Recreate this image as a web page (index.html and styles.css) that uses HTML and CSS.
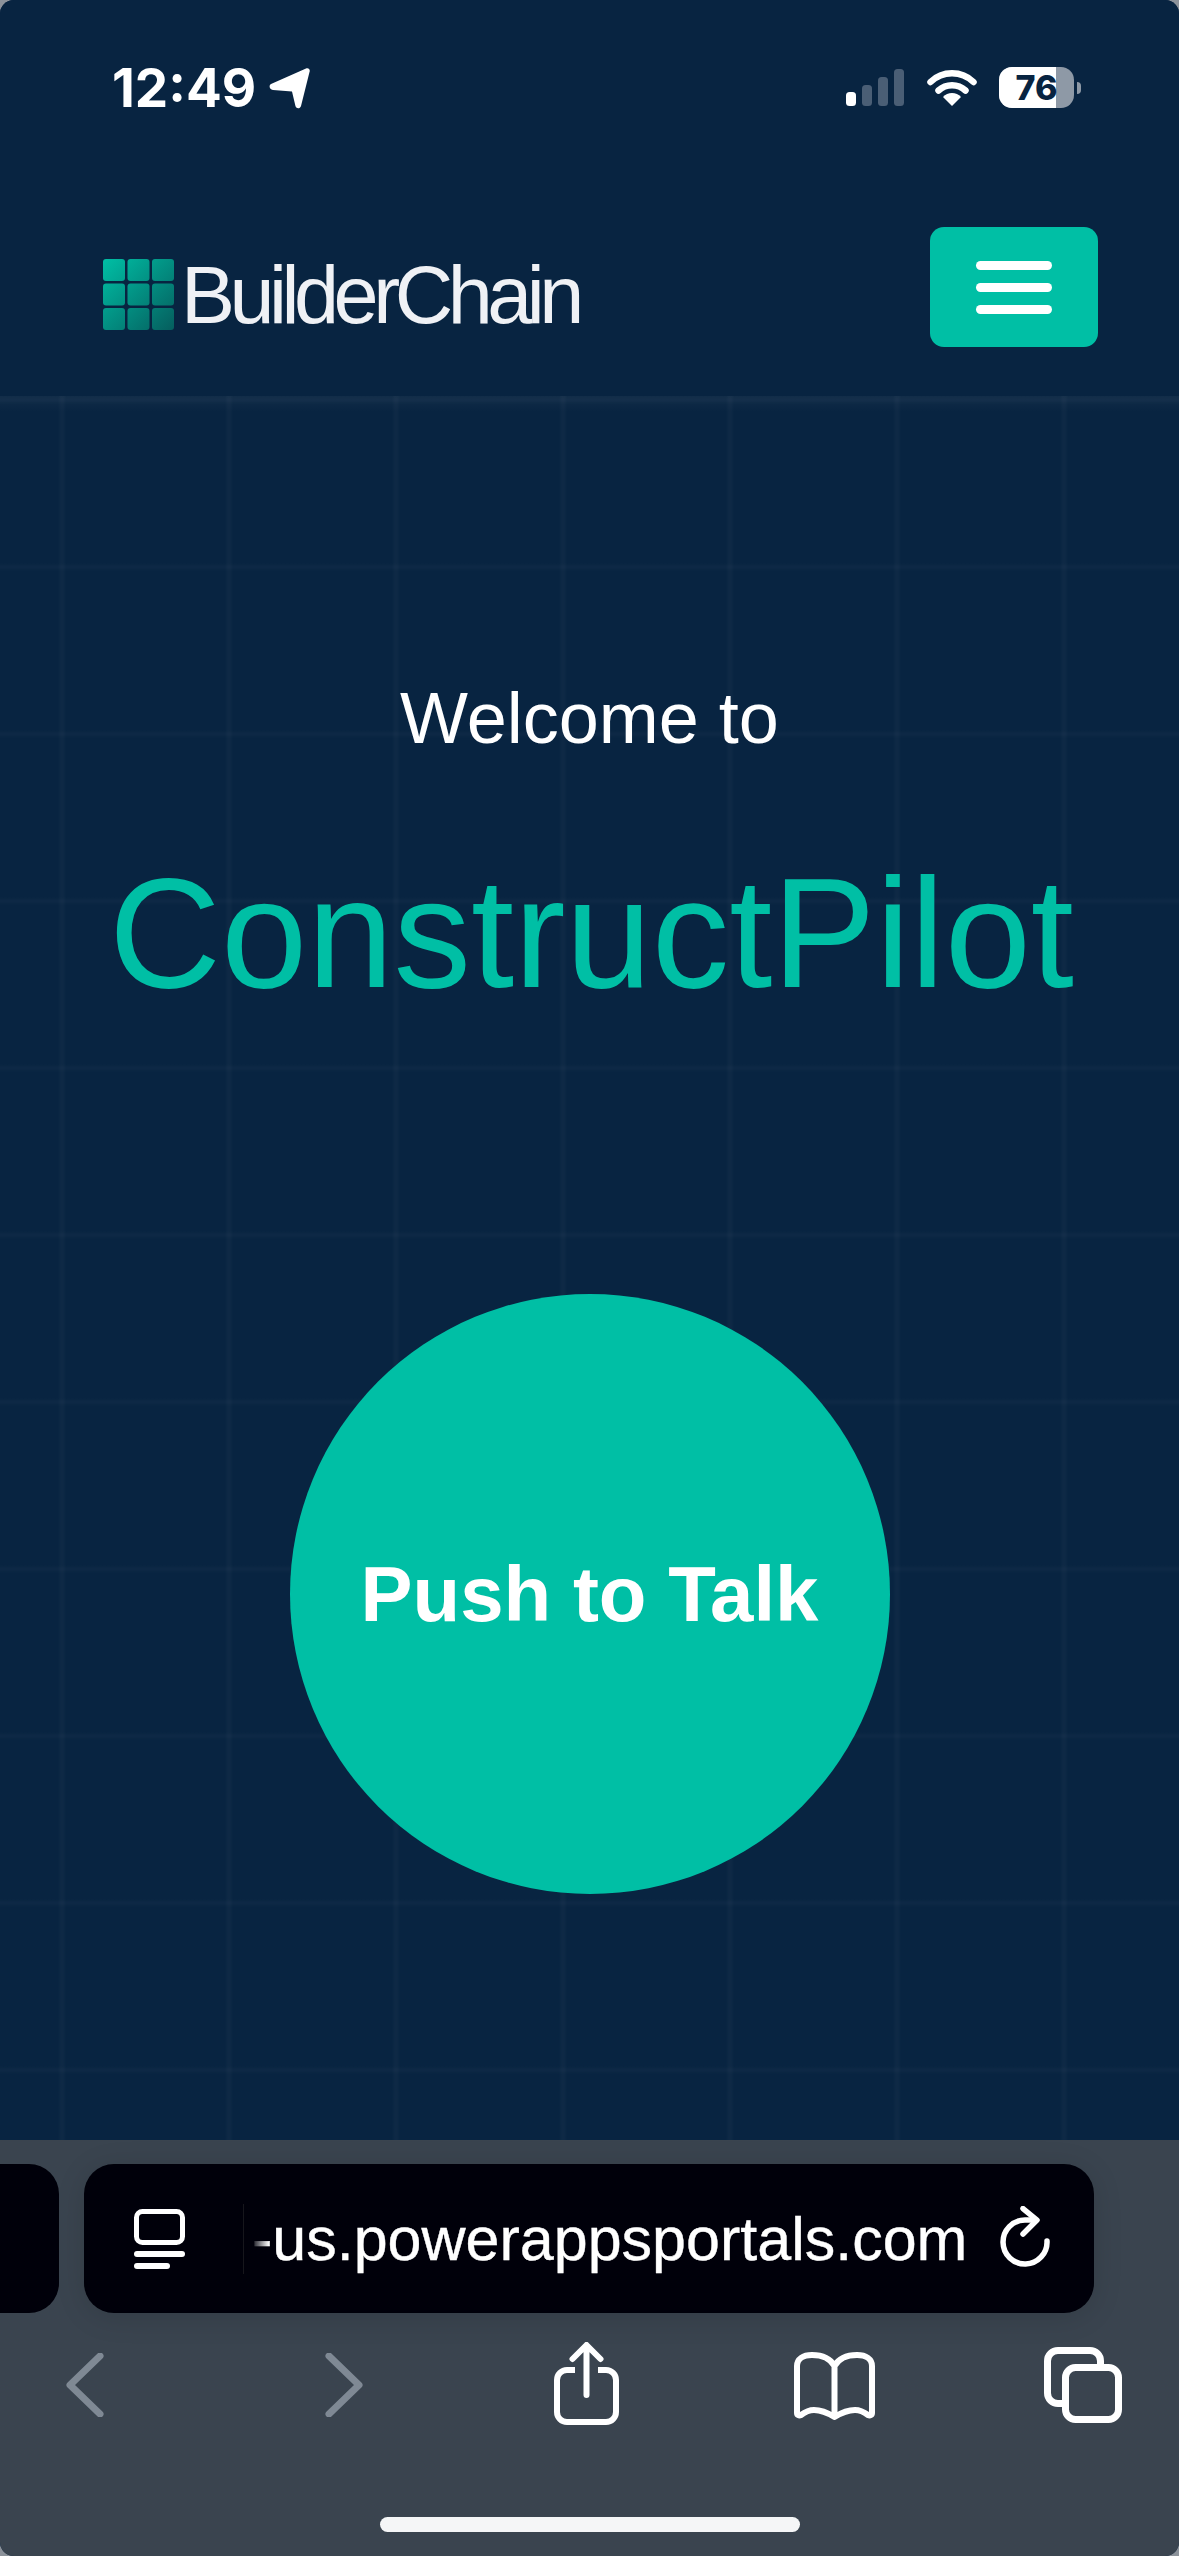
FILE: index.html
```html
<!DOCTYPE html>
<html lang="en">
<head>
<meta charset="utf-8">
<title>ConstructPilot</title>
<link rel="stylesheet" href="styles.css">
</head>
<body>
<div class="phone">
  <div class="page">
    <div class="status">
      <div class="status-left">
        <span class="time">12:49</span>
        <svg class="loc" width="42" height="42" viewBox="0 0 42 42"><path d="M2 17 37 1.500c2.500-1 4.500 1 3.500 3.500L32 39c-1 3-4.500 3-5.500.3L23 24.500 4 23c-3.500-.3-4.500-4.500-2-6z" fill="#fff"/></svg>
      </div>
      <div class="status-right">
        <svg class="signal" width="58" height="37" viewBox="0 0 58 37"><rect x="0" y="23" width="10" height="14" rx="3.500" fill="#fff"/><rect x="16" y="16" width="10" height="21" rx="3.500" fill="#4a5e75"/><rect x="32" y="8" width="10" height="29" rx="3.500" fill="#4a5e75"/><rect x="48" y="0" width="10" height="37" rx="3.500" fill="#4a5e75"/></svg>
        <svg class="wifi" width="50" height="37" viewBox="0 0 50 37"><path d="M3.500 13a31 31 0 0 1 43 0M11.500 21.500a20 20 0 0 1 27 0" fill="none" stroke="#fff" stroke-width="6.500" stroke-linecap="round"/><path d="M25 37 16 28a12 12 0 0 1 18 0z" fill="#fff"/></svg>
        <div class="battery"><span class="battery-fill"></span><span class="battery-num">76</span></div>
        <span class="battery-cap"></span>
      </div>
    </div>
    <header class="topbar">
      <div class="logo">
        <svg class="logo-grid" width="71" height="71" viewBox="0 0 71 71">
          <defs><linearGradient id="lg" gradientUnits="userSpaceOnUse" x1="0" y1="0" x2="71" y2="71"><stop offset="0" stop-color="#00bfa5"/><stop offset="1" stop-color="#055e5e"/></linearGradient></defs>
          <g fill="url(#lg)">
            <rect x="0" y="0" width="22" height="22" rx="3"/><rect x="24.500" y="0" width="22" height="22" rx="3"/><rect x="49" y="0" width="22" height="22" rx="3"/>
            <rect x="0" y="24.500" width="22" height="22" rx="3"/><rect x="24.500" y="24.500" width="22" height="22" rx="3"/><rect x="49" y="24.500" width="22" height="22" rx="3"/>
            <rect x="0" y="49" width="22" height="22" rx="3"/><rect x="24.500" y="49" width="22" height="22" rx="3"/><rect x="49" y="49" width="22" height="22" rx="3"/>
          </g>
        </svg>
        <span class="logo-text">BuilderChain</span>
      </div>
      <button class="menu" aria-label="Menu"><span></span><span></span><span></span></button>
    </header>
    <main class="main">
      <p class="welcome">Welcome to</p>
      <h1 class="title">ConstructPilot</h1>
      <button class="talk">Push to Talk</button>
    </main>
  </div>
  <footer class="safari">
    <div class="tabs">
      <div class="tab-prev"></div>
      <div class="urlbar">
        <svg class="reader" width="51" height="60" viewBox="0 0 51 60"><rect x="2.500" y="2.500" width="46" height="31" rx="6" fill="none" stroke="#fff" stroke-width="5"/><rect x="0" y="42" width="51" height="6" rx="3" fill="#fff"/><rect x="0" y="54" width="36" height="6" rx="3" fill="#fff"/></svg>
        <div class="url"><span class="url-text">-us.powerappsportals.com</span></div>
        <svg class="reload" width="50" height="62" viewBox="0 0 50 62"><path d="M32 14H25A22 22 0 1 0 47 35" fill="none" stroke="#fff" stroke-width="5.500" stroke-linecap="round"/><path d="M23 2.500 37 14 23 28" fill="none" stroke="#fff" stroke-width="5.500" stroke-linecap="round" stroke-linejoin="round"/></svg>
      </div>
    </div>
    <nav class="tools">
      <svg class="tool t-back" width="38" height="64" viewBox="0 0 38 64"><path d="M34 3 4 32 34 61" fill="none" stroke="#7f8994" stroke-width="7" stroke-linecap="round" stroke-linejoin="round"/></svg>
      <svg class="tool t-fwd" width="38" height="64" viewBox="0 0 38 64"><path d="M4 3 34 32 4 61" fill="none" stroke="#7f8994" stroke-width="7" stroke-linecap="round" stroke-linejoin="round"/></svg>
      <svg class="tool t-share" width="65" height="83" viewBox="0 0 65 83"><path d="M21 28H13A10 10 0 0 0 3 38V70A10 10 0 0 0 13 80H52A10 10 0 0 0 62 70V38A10 10 0 0 0 52 28H44" fill="none" stroke="#fff" stroke-width="6"/><path d="M32.500 53V4M18.500 17 32.500 3 46.500 17" fill="none" stroke="#fff" stroke-width="6" stroke-linecap="round" stroke-linejoin="round"/></svg>
      <svg class="tool t-book" width="81" height="68" viewBox="0 0 81 68"><path d="M40.500 14C36 6 28 3 18 3 9 3 3 7 3 14V61c0 2 2 3 4 2 4-3 8-5 13-5 8 0 14 3 20.500 7 6.500-4 12.500-7 20.500-7 5 0 9 2 13 5 2 1 4 0 4-2V14C78 7 72 3 63 3 53 3 45 6 40.500 14zM40.500 14V64" fill="none" stroke="#fff" stroke-width="6" stroke-linecap="round" stroke-linejoin="round"/></svg>
      <svg class="tool t-tabs" width="78" height="76" viewBox="0 0 78 76"><path d="M56.500 17V14A10.500 10.500 0 0 0 46 3.500H14A10.500 10.500 0 0 0 3.500 14V46A10.500 10.500 0 0 0 14 56.500H18" fill="none" stroke="#fff" stroke-width="7"/><rect x="21.500" y="20.500" width="53" height="52" rx="10" fill="none" stroke="#fff" stroke-width="7"/></svg>
    </nav>
    <div class="home"></div>
  </footer>
</div>
</body>
</html>
```
FILE: styles.css
```css
* { box-sizing: border-box; }
html, body { margin: 0; padding: 0; background: #8c929a; }
body { width: 1179px; height: 2556px; overflow: hidden; font-family: "Liberation Sans", Arial, sans-serif; }
.phone { width: 1179px; height: 2556px; display: flex; flex-direction: column; border-radius: 14px; overflow: hidden; background: #082441; }
.page { height: 2140px; display: flex; flex-direction: column; background: #082441; }
.status { height: 120px; padding: 63px 0 0 112px; display: flex; justify-content: space-between; align-items: flex-start; }
.status-left { display: flex; align-items: center; gap: 13px; }
.time { font-family: Inter, sans-serif; font-weight: 700; font-size: 53px; line-height: 50px; color: #fff; }
.status-right { display: flex; align-items: flex-start; padding: 4px 0 0 0; margin-right: 98px; }
.signal { margin: 2px 23px 0 0; }
.wifi { margin: 2px 22px 0 0; }
.battery { position: relative; width: 75px; height: 41px; border-radius: 13px; background: #8e99a6; overflow: hidden; }
.battery-fill { position: absolute; left: 0; top: 0; bottom: 0; width: 57px; background: #fff; }
.battery-num { position: absolute; inset: 0; text-align: center; font-family: Inter, sans-serif; font-weight: 800; font-size: 34px; line-height: 41px; color: #082441; }
.battery-cap { width: 4px; height: 12px; margin: 15px 0 0 3px; border-radius: 0 6px 6px 0; background: #8e99a6; }
.topbar { height: 276px; display: flex; justify-content: space-between; align-items: flex-start; padding: 107px 81px 0 103px; }
.logo { display: flex; align-items: flex-start; margin-top: 32px; }
.logo-grid { flex: none; }
.logo-text { margin-left: 7px; font-size: 81px; line-height: 81px; letter-spacing: -5.500px; color: #eff1f5; margin-top: -4px; }
.menu { width: 168px; height: 120px; padding: 0; border: 0; border-radius: 14px; background: #00bfa5; display: flex; flex-direction: column; justify-content: center; align-items: center; gap: 13px; margin: 0; }
.menu span { display: block; width: 76px; height: 9px; border-radius: 4.500px; background: #fff; }
.main { flex: 1; display: flex; flex-direction: column; align-items: center; background-image: linear-gradient(rgba(255,255,255,.04), rgba(255,255,255,0) 16px), linear-gradient(transparent, rgba(255,255,255,.02) 3px, rgba(255,255,255,.02) 5px, transparent 8px), linear-gradient(90deg, transparent, rgba(255,255,255,.025) 3px, rgba(255,255,255,.025) 5px, transparent 8px); background-size: 100% 16px, 167px 167px, 167px 167px; background-repeat: no-repeat, repeat, repeat; background-position: 0 0, 58px 0, 58px 0; }
.welcome { margin: 282px 0 0; font-size: 72px; line-height: 80px; color: #fff; }
.title { margin: 91px 0 0 4px; font-weight: 400; font-size: 155px; line-height: 170px; color: #00bfa5; }
.talk { width: 600px; height: 600px; margin-top: 275px; padding: 0; border: 0; border-radius: 50%; background: #00bfa5; color: #fff; font-family: "Liberation Sans", Arial, sans-serif; font-weight: 700; font-size: 78px; }
.safari { flex: 1; display: flex; flex-direction: column; background: #3a444f; position: relative; }
.tabs { display: flex; gap: 25px; margin-top: 24px; height: 149px; }
.tab-prev { width: 59px; background: #00000a; border-radius: 0 30px 30px 0; }
.urlbar { width: 1010px; background: #00000a; border-radius: 30px; display: flex; align-items: center; padding: 0 44px 0 50px; box-shadow: 0 4px 30px rgba(0,0,0,.12); }
.reader { flex: none; }
.url { flex: 1; margin-left: 58px; min-width: 0; position: relative; border-left: 1px solid #16161c; padding-left: 8px; }
.url::before { content: ""; position: absolute; left: 1px; top: 0; bottom: 0; width: 24px; background: linear-gradient(90deg, #00000a 25%, rgba(0,0,10,0)); }
.url-text { font-size: 61px; line-height: 70px; color: #fff; white-space: nowrap; -webkit-text-stroke: .4px #fff; }
.reload { flex: none; margin-bottom: 4px; }
.tools { position: relative; height: 120px; }
.tool { position: absolute; }
.t-back { left: 66px; top: 40px; }
.t-fwd { left: 325px; top: 40px; }
.t-share { left: 554px; top: 29px; }
.t-book { left: 794px; top: 39px; }
.t-tabs { left: 1044px; top: 34px; }
.home { position: absolute; left: 380px; bottom: 24px; width: 420px; height: 15px; border-radius: 8px; background: #f5f6f7; }
```
